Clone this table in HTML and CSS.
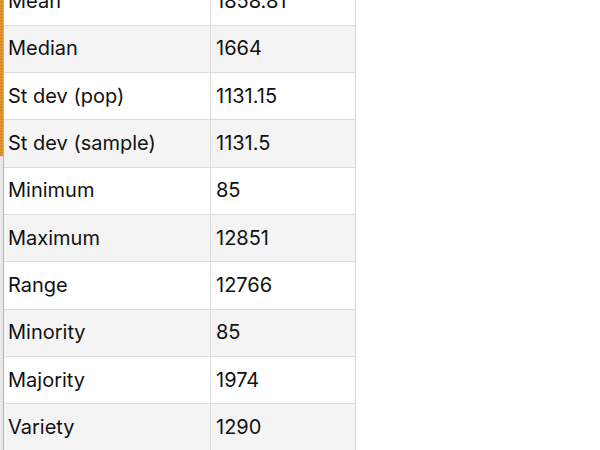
FILE: index.html
```html
<!DOCTYPE html>
<html>
<head>
<meta charset="utf-8">
<link rel="stylesheet" href="styles.css">
</head>
<body>
<div class="page">
  <div class="edge"><div class="edge-orange"></div></div>
  <div class="edge-line"></div>
  <div class="viewport">
    <div class="stats">
      <div class="row"><div class="cell name">Mean</div><div class="cell val">1858.81</div></div>
      <div class="row alt"><div class="cell name">Median</div><div class="cell val">1664</div></div>
      <div class="row"><div class="cell name">St dev (pop)</div><div class="cell val">1131.15</div></div>
      <div class="row alt"><div class="cell name">St dev (sample)</div><div class="cell val">1131.5</div></div>
      <div class="row"><div class="cell name">Minimum</div><div class="cell val">85</div></div>
      <div class="row alt"><div class="cell name">Maximum</div><div class="cell val">12851</div></div>
      <div class="row"><div class="cell name">Range</div><div class="cell val">12766</div></div>
      <div class="row alt"><div class="cell name">Minority</div><div class="cell val">85</div></div>
      <div class="row"><div class="cell name">Majority</div><div class="cell val">1974</div></div>
      <div class="row alt"><div class="cell name">Variety</div><div class="cell val">1290</div></div>
    </div>
  </div>
</div>
</body>
</html>
```
FILE: styles.css
```css
html, body {
  margin: 0;
  padding: 0;
  background: #ffffff;
}
.page {
  display: flex;
  width: 600px;
  height: 450px;
  overflow: hidden;
  font-family: Inter, "Liberation Sans", Arial, sans-serif;
  color: #111111;
}
.edge {
  width: 3px;
  background: #e9e9e9;
  flex: none;
}
.edge-orange {
  height: 156px;
  background: repeating-linear-gradient(180deg, #e8931f 0px, #e8931f 2px, #c98a3c 2px, #c98a3c 3px);
}
.edge-line {
  width: 1px;
  background: #b4b4b4;
  flex: none;
}
.viewport {
  flex: 1;
  overflow: hidden;
}
.stats {
  margin-top: -21.5px;
  width: 351px;
  border-right: 1px solid #d6d6d6;
}
.row {
  display: flex;
  height: 47.3px;
  box-sizing: border-box;
  border-bottom: 1px solid #dcdcdc;
  background: #ffffff;
}
.row.alt {
  background: #f4f4f4;
}
.cell {
  display: flex;
  align-items: center;
  font-size: 20px;
  padding-left: 4px;
  padding-bottom: 1px;
  box-sizing: border-box;
}
.name {
  width: 207px;
  border-right: 1px solid #dcdcdc;
}
.val {
  flex: 1;
  padding-left: 5px;
}
```
